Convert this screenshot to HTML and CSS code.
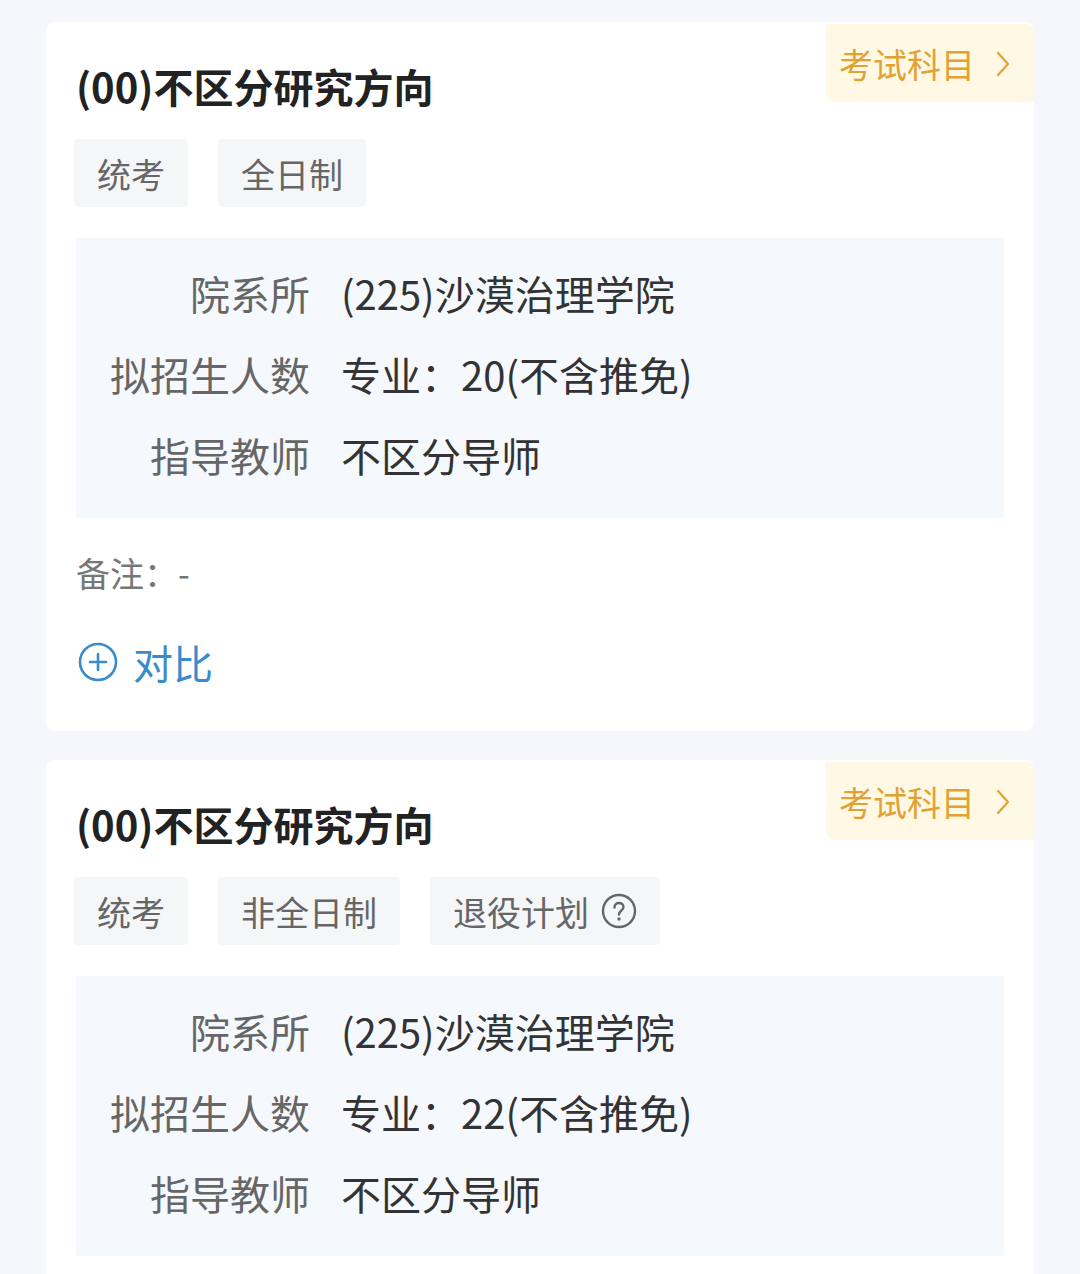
FILE: index.html
```html
<!DOCTYPE html>
<html lang="zh-CN">
<head>
  <meta charset="UTF-8" />
  <meta name="viewport" content="width=device-width, initial-scale=1.0"/>
  <title>专业方向</title>
  <link rel="stylesheet" href="styles.css">
</head>
<body>
  <div class="list">
    <div class="card">
      <a class="subject-btn" href="#">考试科目
        <svg class="chevron" viewBox="0 0 16 28" width="16" height="28"><path d="M3 3 L13 14 L3 25" fill="none" stroke="currentColor" stroke-width="2.2" stroke-linecap="round" stroke-linejoin="round"/></svg>
      </a>
      <h2 class="title">(00)不区分研究方向</h2>
      <div class="tags">
        <span class="tag">统考</span>
        <span class="tag">全日制</span>
      </div>
      <div class="info">
        <div class="label">院系所</div>
        <div class="value">(225)沙漠治理学院</div>
        <div class="label">拟招生人数</div>
        <div class="value">专业：20(不含推免)</div>
        <div class="label">指导教师</div>
        <div class="value">不区分导师</div>
      </div>
      <div class="note">备注：-</div>
      <a class="compare" href="#">
        <svg class="plus" viewBox="0 0 40 40" width="40" height="40"><circle cx="20" cy="20" r="18" fill="none" stroke="currentColor" stroke-width="2.6"/><path d="M20 12 V28 M12 20 H28" stroke="currentColor" stroke-width="2.6" stroke-linecap="round"/></svg>
        对比
      </a>
    </div>

    <div class="card">
      <a class="subject-btn" href="#">考试科目
        <svg class="chevron" viewBox="0 0 16 28" width="16" height="28"><path d="M3 3 L13 14 L3 25" fill="none" stroke="currentColor" stroke-width="2.2" stroke-linecap="round" stroke-linejoin="round"/></svg>
      </a>
      <h2 class="title">(00)不区分研究方向</h2>
      <div class="tags">
        <span class="tag">统考</span>
        <span class="tag">非全日制</span>
        <span class="tag">退役计划
          <svg class="help" viewBox="0 0 36 36" width="36" height="36"><circle cx="18" cy="18" r="16" fill="none" stroke="currentColor" stroke-width="2.4"/><path d="M13.5 14.5 C13.5 11.5 15.5 10 18 10 C20.7 10 22.5 11.8 22.5 14 C22.5 17.5 18 17.5 18 21.5" fill="none" stroke="currentColor" stroke-width="2.4" stroke-linecap="round"/><circle cx="18" cy="26" r="1.7" fill="currentColor"/></svg>
        </span>
      </div>
      <div class="info">
        <div class="label">院系所</div>
        <div class="value">(225)沙漠治理学院</div>
        <div class="label">拟招生人数</div>
        <div class="value">专业：22(不含推免)</div>
        <div class="label">指导教师</div>
        <div class="value">不区分导师</div>
      </div>
    </div>
  </div>
</body>
</html>
```

FILE: styles.css
```css
body {
  margin: 0;
  background: #f5f7fa;
  font-family: "Noto Sans CJK SC", "Noto Sans", sans-serif;
  color: #333;
  overflow: hidden;
}
.list {
  display: flex;
  flex-direction: column;
  gap: 29px;
  padding: 22px 46px 0;
}
.card {
  position: relative;
  background: #fff;
  border-radius: 8px;
  padding: 36px 30px 41px;
}
.subject-btn {
  position: absolute;
  top: 2px;
  right: 0;
  width: 208px;
  height: 78px;
  box-sizing: border-box;
  display: flex;
  align-items: center;
  gap: 20px;
  padding-left: 13px;
  background: #fff8e4;
  color: #e2a231;
  font-size: 34px;
  text-decoration: none;
  border-radius: 0 8px 0 10px;
}
.chevron {
  margin-top: 2px;
}
.title {
  margin: 0;
  font-size: 40px;
  line-height: 56px;
  font-weight: 700;
  color: #222;
}
.tags {
  display: flex;
  gap: 30px;
  margin-top: 25px;
  margin-left: -2px;
}
.tag {
  display: flex;
  align-items: center;
  gap: 12px;
  height: 68px;
  padding: 0 23px;
  background: #f5f6f8;
  border-radius: 4px;
  font-size: 34px;
  color: #666;
}
.help {
  color: #666;
}
.info {
  display: grid;
  grid-template-columns: 234px 1fr;
  column-gap: 31px;
  margin-top: 31px;
  padding: 15px 0 22px;
  background: #f5f8fc;
  border-radius: 4px;
  font-size: 40px;
  line-height: 81px;
}
.label {
  text-align: right;
  color: #666;
}
.value {
  color: #333;
}
.note {
  margin-top: 30px;
  font-size: 34px;
  line-height: 50px;
  color: #777;
}
.compare {
  display: flex;
  align-items: center;
  gap: 15px;
  margin-top: 36px;
  height: 56px;
  font-size: 40px;
  color: #3a8bcc;
  text-decoration: none;
}
.plus {
  margin-left: 2px;
}
```
